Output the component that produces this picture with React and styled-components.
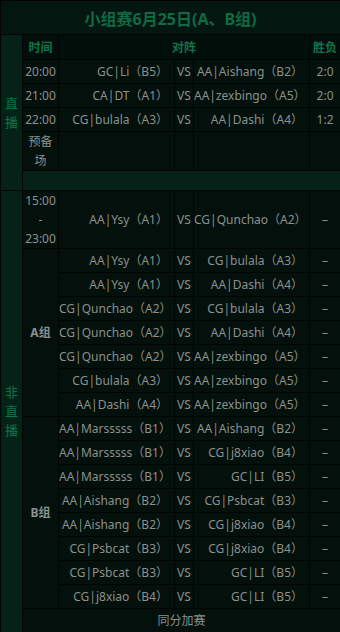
import React from "react";
import styled, { createGlobalStyle } from "styled-components";

const Global = createGlobalStyle`
  html, body { margin: 0; padding: 0; background: #010905; }
  body { font-family: "Noto Sans", "Noto Sans CJK SC", sans-serif; }
`;

const Table = styled.table`
  width: 340px;
  table-layout: fixed;
  border-collapse: collapse;
  background: #03100b;
  font-size: 12px;
  color: #8b918e;
`;

const Cell = styled.td`
  border: 1px solid #000503;
  padding: 0 ${(p) => (p.$align === "right" ? "6px" : "0")} 0 0;
  text-align: ${(p) => p.$align || "center"};
  vertical-align: middle;
  line-height: 19px;
  white-space: nowrap;
  background: ${(p) => p.$bg || "transparent"};
  font-weight: ${(p) => (p.$bold ? 700 : 400)};
`;

const TitleCell = styled.td`
  height: 33px;
  border: 1px solid #000503;
  background: #03160f;
  color: #0f6a45;
  font-family: "Noto Sans", "Noto Sans CJK SC", sans-serif;
  font-size: 16px;
  font-weight: 700;
  text-align: center;
  padding: 0;
`;

const HeadCell = styled.td`
  border: 1px solid #000503;
  color: #13744b;
  font-weight: 700;
  font-size: 12px;
  text-align: center;
  background: #020e09;
  padding: 0;
`;

const SideLabel = styled.td`
  border: 1px solid #000503;
  background: #052218;
  color: #117247;
  font-size: 13px;
  line-height: 19px;
  text-align: center;
  padding: 0;
  white-space: normal;
  word-break: break-all;
`;

const Row = styled.tr`
  height: ${(p) => p.$h || 24}px;
`;

const SpacerCell = styled.td`
  border: 1px solid #000503;
  background: #052218;
  height: 19px;
  padding: 0;
`;

const Wrap = styled.div`
  white-space: normal;
`;

const live = [
  ["20:00", "GC|Li（B5）", "AA|Aishang（B2）", "2:0"],
  ["21:00", "CA|DT（A1）", "AA|zexbingo（A5）", "2:0"],
  ["22:00", "CG|bulala（A3）", "AA|Dashi（A4）", "1:2"],
];

const groupA = [
  ["AA|Ysy（A1）", "CG|bulala（A3）"],
  ["AA|Ysy（A1）", "AA|Dashi（A4）"],
  ["CG|Qunchao（A2）", "CG|bulala（A3）"],
  ["CG|Qunchao（A2）", "AA|Dashi（A4）"],
  ["CG|Qunchao（A2）", "AA|zexbingo（A5）"],
  ["CG|bulala（A3）", "AA|zexbingo（A5）"],
  ["AA|Dashi（A4）", "AA|zexbingo（A5）"],
];

const groupB = [
  ["AA|Marsssss（B1）", "AA|Aishang（B2）"],
  ["AA|Marsssss（B1）", "CG|j8xiao（B4）"],
  ["AA|Marsssss（B1）", "GC|LI（B5）"],
  ["AA|Aishang（B2）", "CG|Psbcat（B3）"],
  ["AA|Aishang（B2）", "CG|j8xiao（B4）"],
  ["CG|Psbcat（B3）", "CG|j8xiao（B4）"],
  ["CG|Psbcat（B3）", "GC|LI（B5）"],
  ["CG|j8xiao（B4）", "GC|LI（B5）"],
];

const Match = ({ a, b, r = "–" }) => (
  <>
    <Cell $align="right">{a}</Cell>
    <Cell>VS</Cell>
    <Cell $align="right">{b}</Cell>
    <Cell>{r}</Cell>
  </>
);

export default function App() {
  return (
    <>
      <Global />
      <Table>
        <colgroup>
          <col style={{ width: 22 }} />
          <col style={{ width: 36 }} />
          <col style={{ width: 116 }} />
          <col style={{ width: 19 }} />
          <col style={{ width: 116 }} />
          <col style={{ width: 31 }} />
        </colgroup>
        <tbody>
          <tr>
            <TitleCell colSpan={6}>小组赛6月25日(A、B组)</TitleCell>
          </tr>
          <Row $h={25}>
            <SideLabel rowSpan={6}>直播</SideLabel>
            <HeadCell>时间</HeadCell>
            <HeadCell colSpan={3}>对阵</HeadCell>
            <HeadCell>胜负</HeadCell>
          </Row>
          {live.map(([t, a, b, r]) => (
            <Row key={t}>
              <Cell>{t}</Cell>
              <Match a={a} b={b} r={r} />
            </Row>
          ))}
          <Row $h={38}>
            <Cell>
              <Wrap>预备<br />场</Wrap>
            </Cell>
            <Cell />
            <Cell />
            <Cell />
            <Cell />
          </Row>
          <tr>
            <SpacerCell colSpan={6} />
          </tr>
          <Row $h={57}>
            <SideLabel rowSpan={18}>非直播</SideLabel>
            <Cell>
              <Wrap>15:00<br />-<br />23:00</Wrap>
            </Cell>
            <Match a="AA|Ysy（A1）" b="CG|Qunchao（A2）" />
          </Row>
          {groupA.map(([a, b], i) => (
            <Row key={"a" + i}>
              {i === 0 && (
                <Cell rowSpan={groupA.length} $bold>
                  A组
                </Cell>
              )}
              <Match a={a} b={b} />
            </Row>
          ))}
          {groupB.map(([a, b], i) => (
            <Row key={"b" + i}>
              {i === 0 && (
                <Cell rowSpan={groupB.length} $bold>
                  B组
                </Cell>
              )}
              <Match a={a} b={b} />
            </Row>
          ))}
          <Row>
            <Cell colSpan={5}>同分加赛</Cell>
          </Row>
        </tbody>
      </Table>
    </>
  );
}
